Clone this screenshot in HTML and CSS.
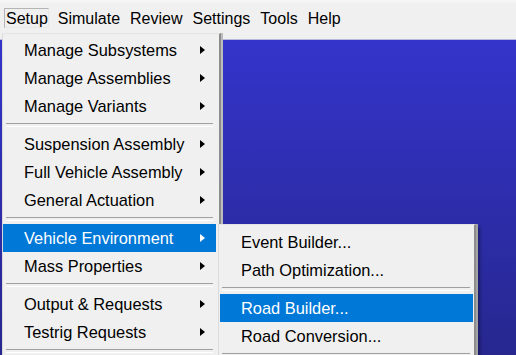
FILE: index.html
```html
<!DOCTYPE html>
<html>
<head>
<meta charset="utf-8">
<link rel="stylesheet" href="styles.css">
</head>
<body>
<div class="app">
  <div class="menubar">
    <span class="mb-item mb-open">Setup</span>
    <span class="mb-item">Simulate</span>
    <span class="mb-item">Review</span>
    <span class="mb-item">Settings</span>
    <span class="mb-item">Tools</span>
    <span class="mb-item">Help</span>
  </div>
  <div class="canvas"></div>

  <div class="menu main-menu">
    <div class="item"><span class="label">Manage Subsystems</span><span class="arrow"></span></div>
    <div class="item"><span class="label">Manage Assemblies</span><span class="arrow"></span></div>
    <div class="item"><span class="label">Manage Variants</span><span class="arrow"></span></div>
    <div class="sep"></div>
    <div class="item"><span class="label">Suspension Assembly</span><span class="arrow"></span></div>
    <div class="item"><span class="label">Full Vehicle Assembly</span><span class="arrow"></span></div>
    <div class="item"><span class="label">General Actuation</span><span class="arrow"></span></div>
    <div class="sep"></div>
    <div class="item active"><span class="label">Vehicle Environment</span><span class="arrow"></span></div>
    <div class="item"><span class="label">Mass Properties</span><span class="arrow"></span></div>
    <div class="sep"></div>
    <div class="item"><span class="label">Output &amp; Requests</span><span class="arrow"></span></div>
    <div class="item"><span class="label">Testrig Requests</span><span class="arrow"></span></div>
    <div class="sep"></div>
  </div>

  <div class="menu sub-menu">
    <div class="item"><span class="label">Event Builder...</span></div>
    <div class="item"><span class="label">Path Optimization...</span></div>
    <div class="sep"></div>
    <div class="item active"><span class="label">Road Builder...</span></div>
    <div class="item"><span class="label">Road Conversion...</span></div>
    <div class="sep"></div>
  </div>
</div>
</body>
</html>
```

FILE: styles.css
```css
* { box-sizing: border-box; }
html, body {
  margin: 0;
  padding: 0;
  width: 516px;
  height: 355px;
  overflow: hidden;
}
body {
  font-family: "Liberation Sans", Arial, sans-serif;
  font-size: 16px;
  color: #000;
  background: #f0f0f0;
}
.app {
  position: relative;
  width: 516px;
  height: 355px;
  overflow: hidden;
  display: flex;
  flex-direction: column;
}
.menubar {
  height: 40px;
  flex: none;
  display: flex;
  align-items: flex-start;
  padding: 8px 0 0 4px;
  background: linear-gradient(#f7f7f7 0, #f0f0f0 4px);
  border-bottom: 1px solid #b9b9e0;
}
.mb-item {
  height: 20px;
  line-height: 19px;
  padding: 0 0 0 1px;
  margin-right: 7px;
  border: 1px solid transparent;
}
.mb-open {
  border-color: #b4b4b4 #e8e8e8 #e8e8e8 #b4b4b4;
}
.canvas {
  flex: 1;
  background: linear-gradient(#3434cb, #27278f);
}
.menu {
  position: absolute;
  background: #f0f0f0;
  display: flex;
  flex-direction: column;
  overflow: hidden;
  font-size: 16.4px;
}
.main-menu {
  left: 2px;
  top: 33px;
  width: 219px;
  height: 322px;
  padding: 2px 3px 0 0;
  border-left: 1px solid #dadada;
  border-top: 1px solid #e4e4e4;
  border-right: 2px solid #8c8c8c;
  box-shadow: 2px 0 0 #bcbcbc;
}
.sub-menu {
  left: 218px;
  top: 224px;
  width: 258px;
  height: 131px;
  padding: 3px 1px 0 1px;
  border-left: 1px solid #dadada;
  border-top: 1px solid #e4e4e4;
  border-right: 2px solid #8c8c8c;
  box-shadow: 2px 0 0 #a4a4a4, 4px 3px 3px rgba(0, 0, 0, 0.35);
}
.item {
  height: 28px;
  flex: none;
  display: flex;
  align-items: center;
  padding-left: 21px;
  padding-right: 11px;
  white-space: nowrap;
}
.item .label { flex: 1; }
.item.active {
  background: #0078d7;
  color: #fff;
}
.arrow {
  width: 0;
  height: 0;
  border-top: 4px solid transparent;
  border-bottom: 4px solid transparent;
  border-left: 5px solid #000;
}
.item.active .arrow { border-left-color: #fff; }
.sep {
  height: 10px;
  flex: none;
  margin: 0 3px;
  padding-top: 3px;
}
.sep::before {
  content: "";
  display: block;
  width: 100%;
  height: 2px;
  border-top: 1px solid #a0a0a0;
  border-bottom: 1px solid #ffffff;
}
.sub-menu .sep { margin: 0 3px 0 2px; }
```
